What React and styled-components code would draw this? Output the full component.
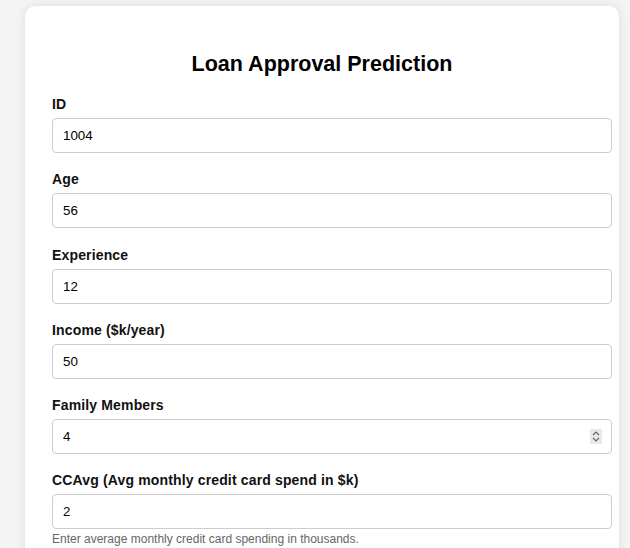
import styled, { createGlobalStyle } from "styled-components";

const GlobalStyle = createGlobalStyle`
  body {
    margin: 0;
    background: #f4f4f4;
    font-family: "Liberation Sans", Arial, sans-serif;
  }
`;

const Page = styled.div`
  padding: 6px 11px 0 25px;
`;

const Card = styled.div`
  background: #fff;
  border-radius: 10px;
  box-shadow: 0 0 10px rgba(0, 0, 0, 0.1);
  padding: 26px 27px;
`;

const Title = styled.h2`
  margin: 20px 0 19px;
  text-align: center;
  font-size: 21.5px;
  font-weight: bold;
  color: #000;
`;

const Group = styled.div`
  margin-bottom: 18.3px;
`;

const Label = styled.label`
  display: block;
  font-size: 14px;
  letter-spacing: 0.15px;
  font-weight: bold;
  color: #111;
  margin-bottom: 6px;
`;

const InputWrap = styled.div`
  position: relative;
  width: calc(100% + 20px);
`;

const Input = styled.input`
  display: block;
  box-sizing: border-box;
  width: 100%;
  height: 35px;
  padding: 0 10px;
  border: 1px solid #ccc;
  border-radius: 4px;
  font-family: "Liberation Sans", Arial, sans-serif;
  font-size: 13.33px;
  color: #000;
  outline: none;
`;

const Spinner = styled.div`
  position: absolute;
  right: 10px;
  top: 10px;
  width: 12px;
  height: 15px;
  background: #e9e9e9;
  display: flex;
  align-items: center;
  justify-content: center;
`;

const Hint = styled.small`
  display: block;
  margin-top: 3px;
  font-size: 12px;
  color: #666;
`;

const fields = [
  { label: "ID", value: "1004" },
  { label: "Age", value: "56" },
  { label: "Experience", value: "12" },
  { label: "Income ($k/year)", value: "50" },
  { label: "Family Members", value: "4", spinner: true },
  {
    label: "CCAvg (Avg monthly credit card spend in $k)",
    value: "2",
    hint: "Enter average monthly credit card spending in thousands.",
  },
];

function SpinIcon() {
  return (
    <svg width="10" height="13" viewBox="0 0 10 13">
      <path d="M2 5 L5 2 L8 5" fill="none" stroke="#666" strokeWidth="1.2" />
      <path d="M2 8 L5 11 L8 8" fill="none" stroke="#666" strokeWidth="1.2" />
    </svg>
  );
}

export default function App() {
  return (
    <Page>
      <GlobalStyle />
      <Card>
        <Title>Loan Approval Prediction</Title>
        {fields.map(f => (
          <Group key={f.label}>
            <Label>{f.label}</Label>
            <InputWrap>
              <Input type="text" defaultValue={f.value} />
              {f.spinner && (
                <Spinner>
                  <SpinIcon />
                </Spinner>
              )}
            </InputWrap>
            {f.hint && <Hint>{f.hint}</Hint>}
          </Group>
        ))}
      </Card>
    </Page>
  );
}
